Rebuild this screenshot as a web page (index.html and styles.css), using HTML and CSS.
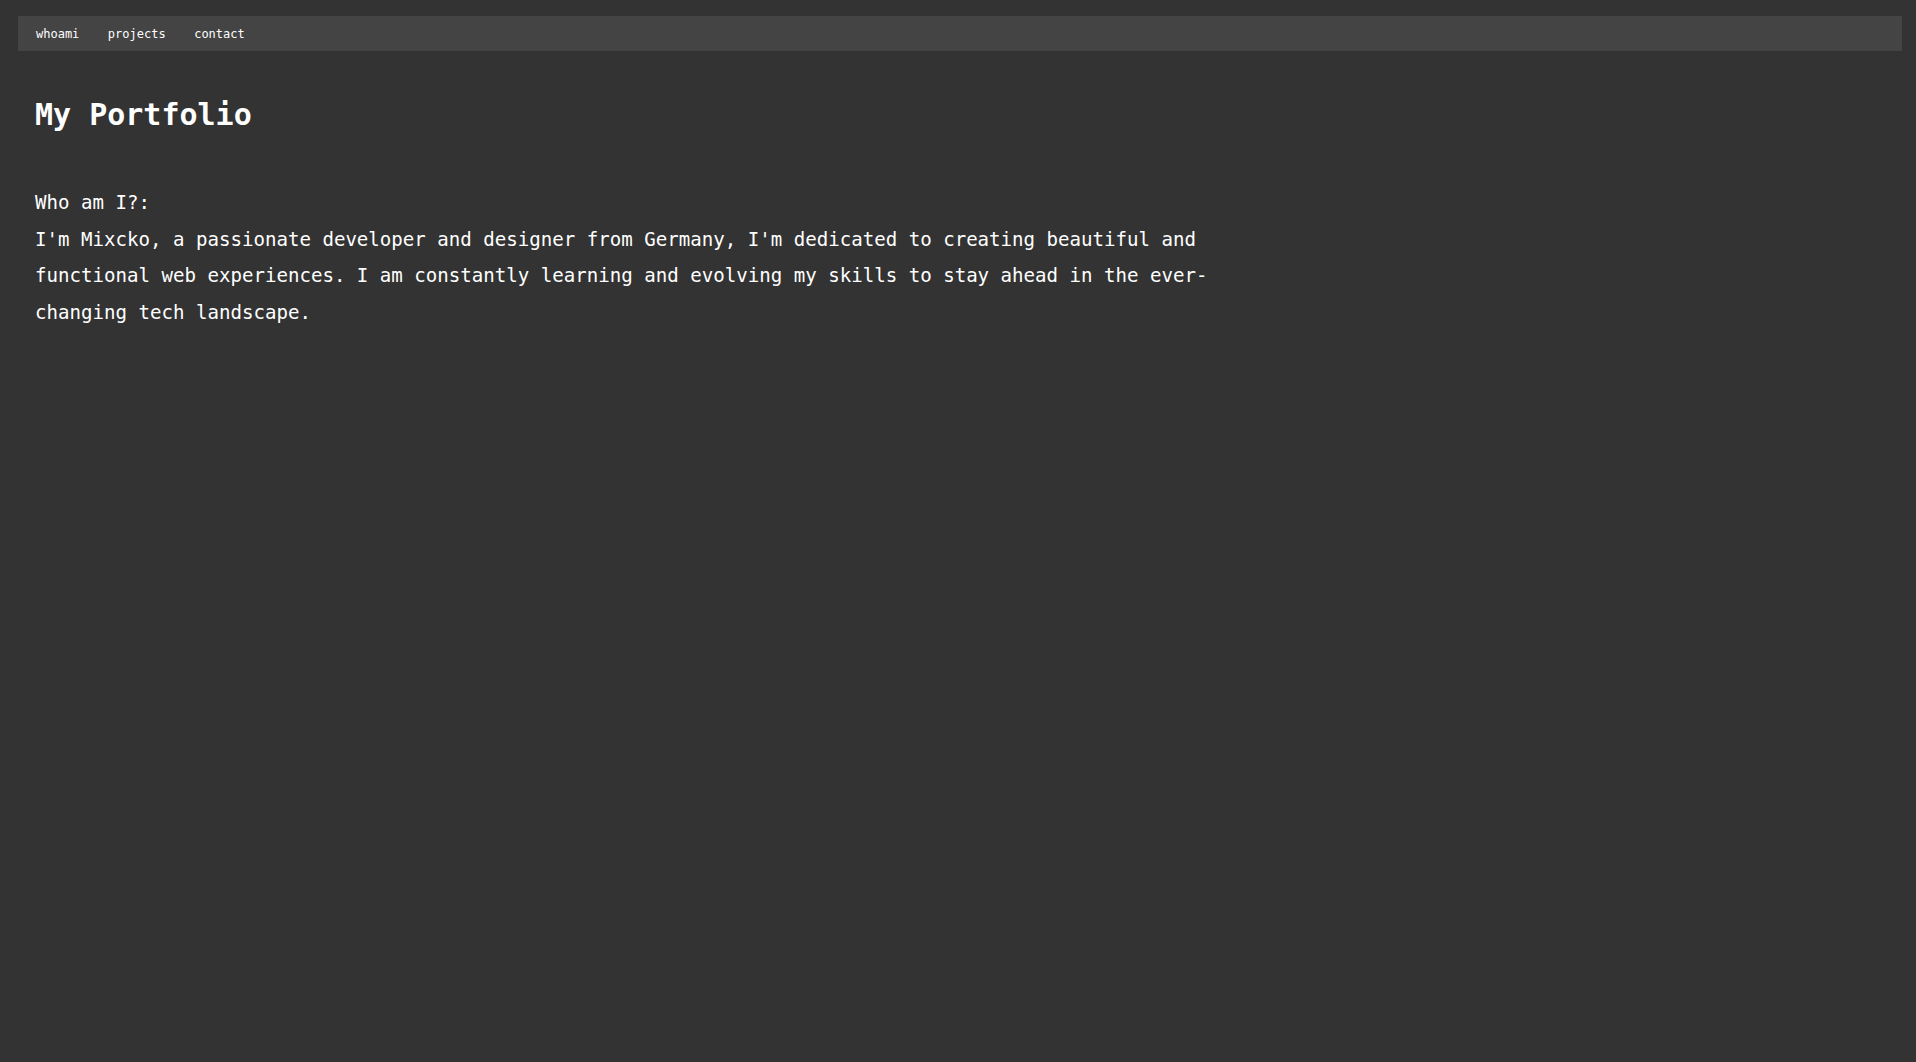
FILE: index.html
```html
<!DOCTYPE html>
<html lang="en">
<head>
<meta charset="utf-8">
<title>My Portfolio</title>
<link rel="stylesheet" href="styles.css">
</head>
<body>
<nav class="topnav">
  <a class="navlink" href="#whoami">whoami</a>
  <a class="navlink" href="#projects">projects</a>
  <a class="navlink" href="#contact">contact</a>
</nav>
<main class="content">
  <h1 class="title">My Portfolio</h1>
  <section class="about">
    <h2 class="about-head">Who am I?:</h2>
    <p class="about-text">I'm Mixcko, a passionate developer and designer from Germany, I'm dedicated to creating beautiful and functional web experiences. I am constantly learning and evolving my skills to stay ahead in the ever-changing tech landscape.</p>
  </section>
</main>
</body>
</html>
```
FILE: styles.css
```css
html, body {
  background: #333333;
}
body {
  margin: 16px 14px 0 18px;
  color: #ffffff;
  font-family: "DejaVu Sans Mono", "Liberation Mono", monospace;
}
.topnav {
  display: flex;
  gap: 28.5px;
  background: #444444;
  height: 35px;
  box-sizing: border-box;
  padding: 2px 0 0 18px;
}
.navlink {
  color: #ffffff;
  text-decoration: none;
  font-size: 12px;
  line-height: 33px;
}
.content {
  padding: 0 17px;
}
.title {
  margin: 46px 0 0;
  font-size: 30px;
  line-height: 36px;
  font-weight: bold;
}
.about {
  margin-top: 52px;
  max-width: 1200px;
}
.about-head,
.about-text {
  margin: 0;
  font-size: 19.1px;
  line-height: 36.7px;
  font-weight: normal;
}
```
